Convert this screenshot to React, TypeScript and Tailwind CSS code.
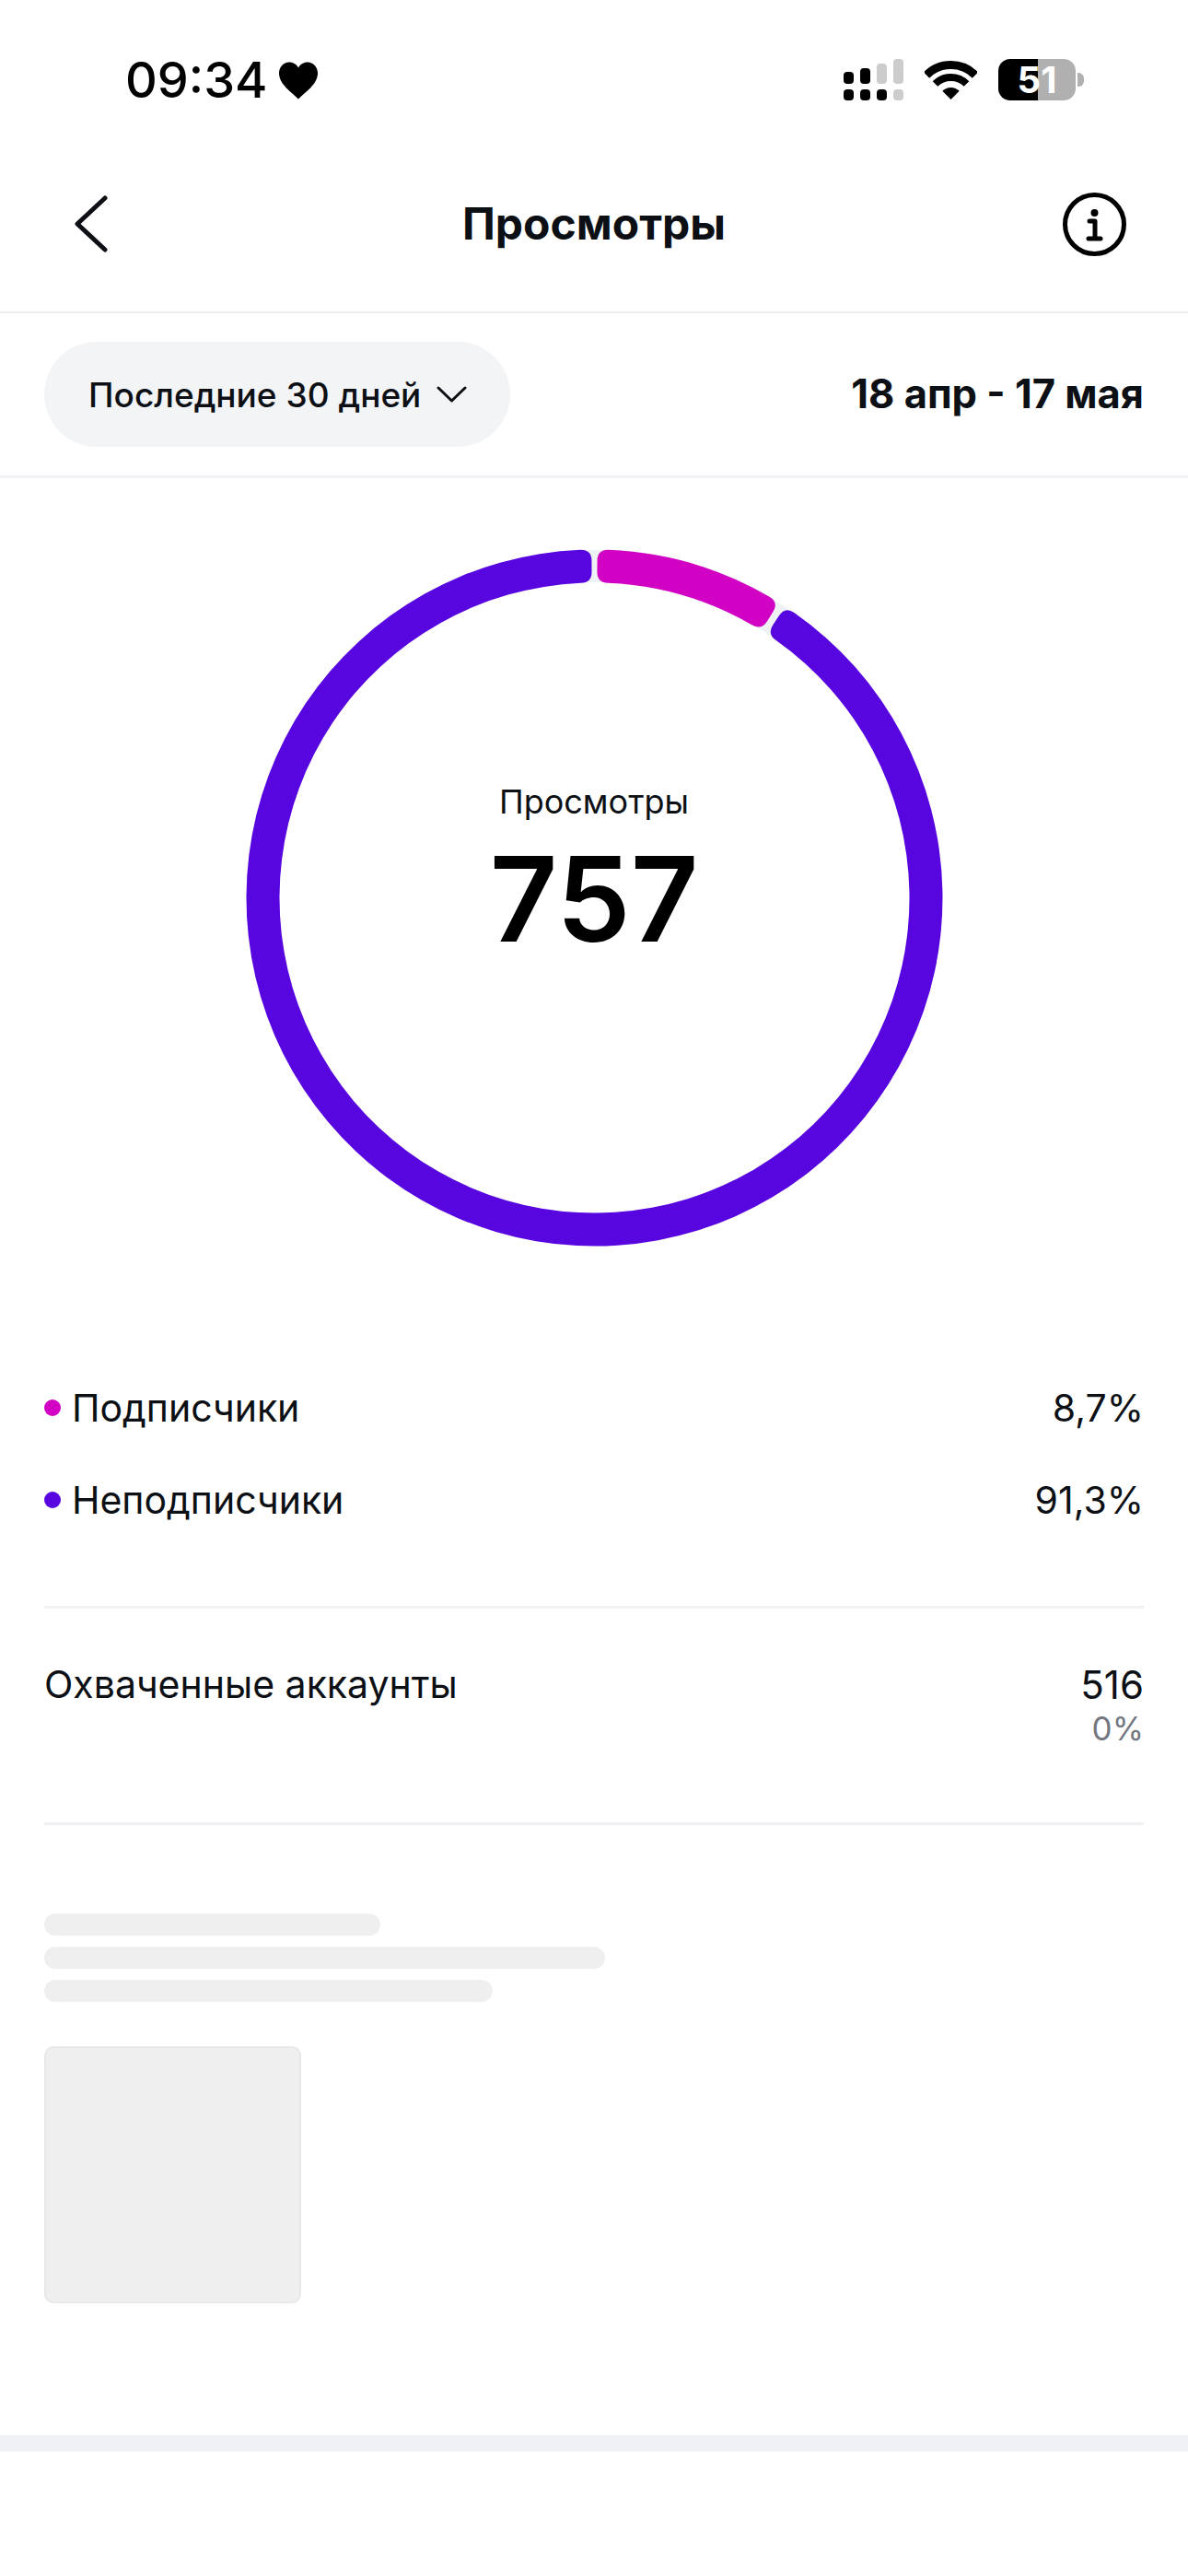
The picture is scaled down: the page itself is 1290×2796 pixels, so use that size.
const CX = 378.5;
const CY = 378.5;
const RO = 378;
const RI = 342;
const C = 12;

function pt(r: number, deg: number) {
  const a = (deg * Math.PI) / 180;
  return `${(CX + r * Math.sin(a)).toFixed(2)} ${(CY - r * Math.cos(a)).toFixed(2)}`;
}

function sector(a0: number, a1: number) {
  const dO = ((C / RO) * 180) / Math.PI;
  const dI = ((C / RI) * 180) / Math.PI;
  const large = a1 - a0 > 180 ? 1 : 0;
  return [
    `M${pt(RO, a0 + dO)}`,
    `A${RO} ${RO} 0 ${large} 1 ${pt(RO, a1 - dO)}`,
    `Q${pt(RO, a1)} ${pt(RO - C, a1)}`,
    `L${pt(RI + C, a1)}`,
    `Q${pt(RI, a1)} ${pt(RI, a1 - dI)}`,
    `A${RI} ${RI} 0 ${large} 0 ${pt(RI, a0 + dI)}`,
    `Q${pt(RI, a0)} ${pt(RI + C, a0)}`,
    `L${pt(RO - C, a0)}`,
    `Q${pt(RO, a0)} ${pt(RO, a0 + dO)}Z`,
  ].join(" ");
}

function Signal() {
  return (
    <svg width="65" height="45" viewBox="0 0 65 45">
      <rect x="0" y="14" width="11" height="13" rx="4" fill="#000" />
      <rect x="18" y="10" width="11" height="17" rx="4" fill="#000" />
      <rect x="36" y="5" width="11" height="22" rx="4" fill="#cccccc" />
      <rect x="54" y="0" width="11" height="27" rx="4" fill="#cccccc" />
      <rect x="0" y="33" width="11" height="12" rx="4" fill="#000" />
      <rect x="18" y="33" width="11" height="12" rx="4" fill="#000" />
      <rect x="36" y="33" width="11" height="12" rx="4" fill="#000" />
      <rect x="54" y="33" width="11" height="12" rx="4" fill="#cccccc" />
    </svg>
  );
}

function Wifi() {
  return (
    <svg width="57" height="42" viewBox="0 0 57 42">
      <path d="M2 15.5A37.5 37.5 0 0 1 55 15.5" fill="none" stroke="#000" strokeWidth="9" />
      <path d="M11.5 25A24 24 0 0 1 45.5 25" fill="none" stroke="#000" strokeWidth="8" />
      <path d="M28.5 42L19.3 32.8A13 13 0 0 1 37.7 32.8Z" fill="#000" />
    </svg>
  );
}

function Battery() {
  return (
    <div className="flex items-center gap-[2px]">
      <div className="relative flex h-[45px] w-[84px]">
        <div className="w-[43px] rounded-l-[13px] bg-black" />
        <div className="flex-1 rounded-r-[13px] bg-[#b0b0b0]" />
        <span className="absolute inset-0 flex items-center justify-center text-[40px] leading-none font-bold text-white">
          51
        </span>
      </div>
      <div className="h-[15px] w-[7px] rounded-r-[6px] bg-[#b0b0b0]" />
    </div>
  );
}

function Row({ color, label, value }: { color: string; label: string; value: string }) {
  return (
    <div className="flex h-[100px] items-center justify-between">
      <div className="flex items-center gap-[12px]">
        <span className={`h-[18px] w-[18px] rounded-full ${color}`} />
        <span className="text-[41px] leading-none text-[#0c1014]">{label}</span>
      </div>
      <span className="text-[41px] leading-none text-[#0c1014]">{value}</span>
    </div>
  );
}

export default function App() {
  return (
    <div className="min-h-[2796px] w-[1290px] bg-white font-['Inter','Noto_Sans',sans-serif] text-black">
      {/* status bar */}
      <div className="flex h-[148px] items-start justify-between pt-[64px] pr-[113px] pl-[136px]">
        <div className="flex h-[45px] items-center gap-[11px]">
          <span className="text-[54px] leading-none font-medium">09:34</span>
          <svg className="mt-[2px]" width="44" height="41" viewBox="0 0 44 40">
            <path d="M22 40C15 33 1 24 1 12C1 5 6 0 12 0C16.5 0 20 2.5 22 6C24 2.5 27.5 0 32 0C38 0 43 5 43 12C43 24 29 33 22 40Z" fill="#000" />
          </svg>
        </div>
        <div className="flex items-center gap-[23px]">
          <Signal />
          <Wifi />
          <Battery />
        </div>
      </div>

      {/* nav */}
      <div className="grid h-[192px] grid-cols-[1fr_auto_1fr] items-center border-b-2 border-[#ebedf0] px-[67px]">
        <svg className="ml-[14px]" width="36" height="62" viewBox="0 0 36 62">
          <path d="M33 3L3 31L33 59" fill="none" stroke="#0c1014" strokeWidth="5" strokeLinecap="round" strokeLinejoin="round" />
        </svg>
        <h1 className="text-[48px] leading-none font-bold text-[#0c1014]">Просмотры</h1>
        <svg className="justify-self-end" width="69" height="69" viewBox="0 0 69 69">
          <circle cx="34.5" cy="34.5" r="32" fill="none" stroke="#000" strokeWidth="5" />
          <circle cx="34.5" cy="22" r="4" fill="#000" />
          <path d="M29 31H35V50M28 50H41" fill="none" stroke="#000" strokeWidth="5" strokeLinecap="round" strokeLinejoin="round" />
        </svg>
      </div>

      {/* filter */}
      <div className="flex h-[179px] items-center justify-between border-b-[3px] border-[#f0f1f5] px-[48px]">
        <div className="flex h-[114px] w-[506px] items-center gap-[17px] rounded-full bg-[#f3f4f6] pl-[48px]">
          <span className="text-[37px] leading-none font-medium text-[#0c1014]">Последние 30 дней</span>
          <svg width="33" height="18" viewBox="0 0 33 18">
            <path d="M2 2L16.5 16L31 2" fill="none" stroke="#0c1014" strokeWidth="3" strokeLinecap="round" strokeLinejoin="round" />
          </svg>
        </div>
        <span className="text-[43.5px] leading-none font-bold text-[#0c1014]">18 апр - 17 мая</span>
      </div>

      {/* donut */}
      <div className="flex justify-center pt-[77px]">
        <div className="relative h-[757px] w-[757px]">
          <svg width="757" height="757" viewBox="0 0 757 757">
            <circle cx={CX} cy={CY} r="360" fill="none" stroke="#eff2f5" strokeWidth="35" />
            <path d={sector(0.48, 32)} fill="#d102c4" />
            <path d={sector(33.2, 360 - 0.48)} fill="#5806df" />
          </svg>
          <div className="absolute inset-0 flex flex-col items-center justify-center">
            <span className="text-[36px] leading-none text-[#0c1014]">Просмотры</span>
            <span className="mt-[24px] text-[128px] leading-none font-semibold text-black">757</span>
            <span className="h-[58px]" />
          </div>
        </div>
      </div>

      {/* stats */}
      <div className="px-[48px] pt-[125px]">
        <Row color="bg-[#d102c4]" label="Подписчики" value="8,7%" />
        <Row color="bg-[#5806df]" label="Неподписчики" value="91,3%" />
        <div className="mt-[65px] h-[3px] bg-[#f0f1f5]" />
        <div className="flex h-[232px] items-start justify-between pt-[62px]">
          <span className="text-[41px] leading-none text-[#0c1014]">Охваченные аккаунты</span>
          <div className="flex flex-col items-end">
            <span className="text-[42px] leading-none text-[#0c1014]">516</span>
            <span className="mt-[9px] text-[35px] leading-none text-[#737880]">0%</span>
          </div>
        </div>
        <div className="h-[3px] bg-[#f0f1f5]" />
      </div>

      {/* skeleton */}
      <div className="flex flex-col gap-[12px] px-[48px] pt-[96px]">
        <div className="h-[24px] w-[365px] rounded-[12px] bg-[#efefef]" />
        <div className="h-[24px] w-[609px] rounded-[12px] bg-[#efefef]" />
        <div className="h-[24px] w-[487px] rounded-[12px] bg-[#efefef]" />
        <div className="mt-[36px] h-[279px] w-[279px] rounded-[10px] border-2 border-[#e6e8ec] bg-[#efefef]" />
      </div>

      <div className="mt-[143px] h-[18px] bg-[#f0f1f5]" />
    </div>
  );
}
